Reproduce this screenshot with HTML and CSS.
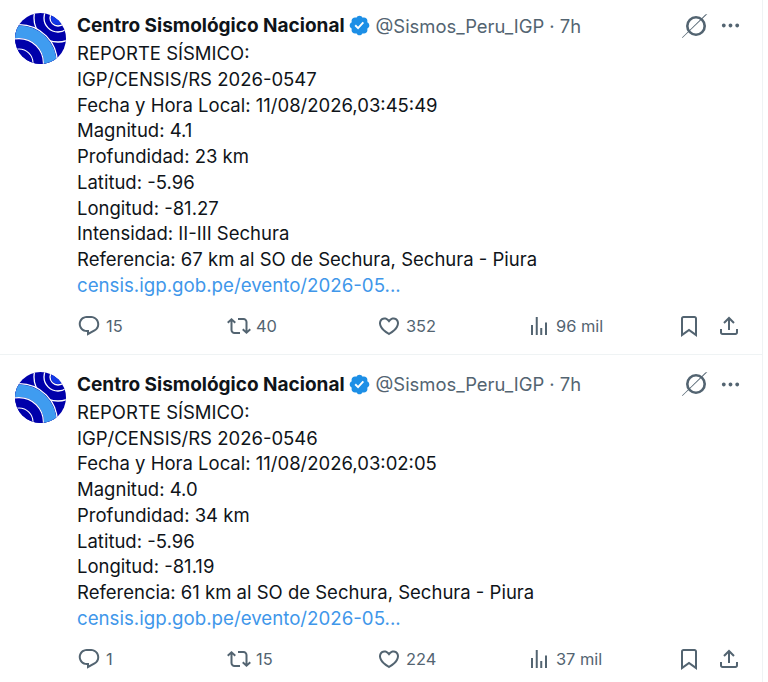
FILE: index.html
```html
<!DOCTYPE html>
<html lang="es">
<head>
    <meta charset="UTF-8">
    <meta name="viewport" content="width=device-width, initial-scale=1.0">
    <title>Centro Sismológico Nacional</title>
    <link rel="stylesheet" href="styles.css">
</head>
<body>
    <svg class="sprites" aria-hidden="true">
        <symbol id="i-verified" viewBox="0 0 24 24"><path d="M22.25 12c0-1.43-.88-2.67-2.19-3.34.46-1.39.2-2.9-.81-3.91s-2.52-1.27-3.91-.81c-.66-1.31-1.91-2.19-3.34-2.19s-2.67.88-3.33 2.19c-1.4-.46-2.91-.2-3.92.81s-1.26 2.52-.8 3.91c-1.31.67-2.2 1.91-2.2 3.34s.89 2.67 2.2 3.34c-.46 1.39-.21 2.9.8 3.91s2.52 1.26 3.91.81c.67 1.31 1.91 2.19 3.34 2.19s2.68-.88 3.34-2.19c1.39.45 2.9.2 3.91-.81s1.27-2.52.81-3.91c1.31-.67 2.19-1.91 2.19-3.34zm-11.71 4.2L6.8 12.46l1.41-1.42 2.26 2.26 4.8-5.23 1.47 1.36-6.2 6.77z"/></symbol>
        <symbol id="i-more" viewBox="0 0 24 24"><path d="M3 12c0-1.1.9-2 2-2s2 .9 2 2-.9 2-2 2-2-.9-2-2zm9 2c1.1 0 2-.9 2-2s-.9-2-2-2-2 .9-2 2 .9 2 2 2zm7 0c1.1 0 2-.9 2-2s-.9-2-2-2-2 .9-2 2 .9 2 2 2z"/></symbol>
        <symbol id="i-grok" viewBox="0 0 28 26"><path fill-rule="evenodd" d="M15 3a10 10 0 1 0 0 20a10 10 0 1 0 0-20zm0 2.6a7.4 7.4 0 1 1 0 14.8a7.4 7.4 0 1 1 0-14.8z"/><path d="M26.4 1 L1.4 25 L1 24.6 L24.4 1.6z"/></symbol>
        <symbol id="i-reply" viewBox="0 0 24 24"><path d="M1.751 10c0-4.42 3.584-8 8.005-8h4.366c4.49 0 8.129 3.64 8.129 8.13 0 2.96-1.607 5.68-4.196 7.11l-8.054 4.46v-3.69h-.067c-4.49.1-8.183-3.51-8.183-8.01zm8.005-6c-3.317 0-6.005 2.69-6.005 6 0 3.37 2.77 6.08 6.138 6.01l.351-.01h1.761v2.3l5.087-2.81c1.951-1.08 3.163-3.13 3.163-5.36 0-3.39-2.744-6.13-6.129-6.13H9.756z"/></symbol>
        <symbol id="i-repost" viewBox="0 0 24 24"><path d="M4.5 3.88l4.432 4.14-1.364 1.46L5.5 7.55V16c0 1.1.896 2 2 2H13v2H7.5c-2.209 0-4-1.79-4-4V7.55L1.432 9.48.068 8.02 4.5 3.88zM16.5 6H11V4h5.5c2.209 0 4 1.79 4 4v8.45l2.068-1.93 1.364 1.46-4.432 4.14-4.432-4.14 1.364-1.46 2.068 1.93V8c0-1.1-.896-2-2-2z"/></symbol>
        <symbol id="i-like" viewBox="0 0 24 24"><path d="M16.697 5.5c-1.222-.06-2.679.51-3.89 2.16l-.805 1.09-.806-1.09C9.984 6.01 8.526 5.44 7.304 5.5c-1.243.07-2.349.78-2.91 1.91-.552 1.12-.633 2.78.479 4.82 1.074 1.97 3.257 4.27 7.129 6.61 3.87-2.34 6.052-4.64 7.126-6.61 1.111-2.04 1.03-3.7.477-4.82-.561-1.13-1.666-1.84-2.908-1.91zm4.187 7.69c-1.351 2.48-4.001 5.12-8.379 7.67l-.503.3-.504-.3c-4.379-2.55-7.029-5.19-8.382-7.67-1.36-2.5-1.41-4.86-.514-6.67.887-1.79 2.647-2.91 4.601-3.01 1.651-.09 3.368.56 4.798 2.01 1.429-1.45 3.146-2.1 4.796-2.01 1.954.1 3.714 1.22 4.601 3.01.896 1.81.846 4.17-.514 6.67z"/></symbol>
        <symbol id="i-views" viewBox="0 0 24 24"><path d="M8.75 21V3h2v18h-2zM18 21V8.5h2V21h-2zM4 21l.004-10h2L6 21H4zm9.248 0v-7h2v7h-2z"/></symbol>
        <symbol id="i-bookmark" viewBox="0 0 24 24"><path d="M4 4.5C4 3.12 5.119 2 6.5 2h11C18.881 2 20 3.12 20 4.5v18.44l-8-5.71-8 5.71V4.5zM6.5 4c-.276 0-.5.22-.5.5v14.56l6-4.29 6 4.29V4.5c0-.28-.224-.5-.5-.5h-11z"/></symbol>
        <symbol id="i-share" viewBox="0 0 24 24"><path d="M12 2.59l5.7 5.7-1.41 1.42L13 6.41V16h-2V6.41l-3.3 3.3-1.41-1.42L12 2.59zM21 15l-.02 3.51c0 1.38-1.12 2.49-2.5 2.49H5.5C4.11 21 3 19.88 3 18.5V15h2v3.5c0 .28.22.5.5.5h12.98c.28 0 .5-.22.5-.5L19 15h2z"/></symbol>
        <symbol id="i-avatar" viewBox="0 0 51 51">
            <g fill="none">
                <rect width="51" height="51" fill="#0000aa"/>
                <circle cx="43" cy="5" r="7" fill="#1238e6"/>
                <circle cx="43" cy="5" r="8" stroke="#fff" stroke-width="1.3"/>
                <circle cx="43" cy="5" r="14" stroke="#fff" stroke-width="1.3"/>
                <circle cx="43" cy="5" r="24" stroke="#fff" stroke-width="1.3"/>
                <circle cx="4" cy="50" r="38.4" stroke="#fff" stroke-width="1.3" fill="#0000aa"/>
                <circle cx="4" cy="50" r="31.2" stroke="#3f9cf0" stroke-width="12.5"/>
                <circle cx="4" cy="50" r="24.4" stroke="#fff" stroke-width="1.1"/>
                <circle cx="4" cy="50" r="14" stroke="#fff" stroke-width="1.1"/>
            </g>
        </symbol>
    </svg>

    <main class="timeline">
        <article class="tweet">
            <svg class="avatar"><use href="#i-avatar"/></svg>
            <div class="tweet-body">
                <div class="tweet-head">
                    <span class="name">Centro Sismológico Nacional</span>
                    <svg class="verified"><use href="#i-verified"/></svg>
                    <span class="handle">@Sismos_Peru_IGP · 7h</span>
                    <span class="head-icons">
                        <svg class="grok"><use href="#i-grok"/></svg>
                        <svg class="more"><use href="#i-more"/></svg>
                    </span>
                </div>
                <p class="tweet-text">REPORTE SÍSMICO:
IGP/CENSIS/RS 2026-0547
Fecha y Hora Local: 11/08/2026,03:45:49
Magnitud: 4.1
Profundidad: 23 km
Latitud: -5.96
Longitud: -81.27
Intensidad: II-III Sechura
Referencia: 67 km al SO de Sechura, Sechura - Piura
<a class="link" href="#">censis.igp.gob.pe/evento/2026-05...</a></p>
                <div class="actions">
                    <span class="action"><svg><use href="#i-reply"/></svg>15</span>
                    <span class="action"><svg><use href="#i-repost"/></svg>40</span>
                    <span class="action"><svg><use href="#i-like"/></svg>352</span>
                    <span class="action"><svg><use href="#i-views"/></svg>96 mil</span>
                    <span class="action-end">
                        <svg><use href="#i-bookmark"/></svg>
                        <svg><use href="#i-share"/></svg>
                    </span>
                </div>
            </div>
        </article>

        <article class="tweet">
            <svg class="avatar"><use href="#i-avatar"/></svg>
            <div class="tweet-body">
                <div class="tweet-head">
                    <span class="name">Centro Sismológico Nacional</span>
                    <svg class="verified"><use href="#i-verified"/></svg>
                    <span class="handle">@Sismos_Peru_IGP · 7h</span>
                    <span class="head-icons">
                        <svg class="grok"><use href="#i-grok"/></svg>
                        <svg class="more"><use href="#i-more"/></svg>
                    </span>
                </div>
                <p class="tweet-text">REPORTE SÍSMICO:
IGP/CENSIS/RS 2026-0546
Fecha y Hora Local: 11/08/2026,03:02:05
Magnitud: 4.0
Profundidad: 34 km
Latitud: -5.96
Longitud: -81.19
Referencia: 61 km al SO de Sechura, Sechura - Piura
<a class="link" href="#">censis.igp.gob.pe/evento/2026-05...</a></p>
                <div class="actions">
                    <span class="action"><svg><use href="#i-reply"/></svg>1</span>
                    <span class="action"><svg><use href="#i-repost"/></svg>15</span>
                    <span class="action"><svg><use href="#i-like"/></svg>224</span>
                    <span class="action"><svg><use href="#i-views"/></svg>37 mil</span>
                    <span class="action-end">
                        <svg><use href="#i-bookmark"/></svg>
                        <svg><use href="#i-share"/></svg>
                    </span>
                </div>
            </div>
        </article>
    </main>
</body>
</html>
```

FILE: styles.css
```css
body {
    margin: 0;
    background: #fff;
    color: #0f1419;
    font-family: Inter, "Liberation Sans", sans-serif;
    overflow: hidden;
}
.sprites {
    display: none;
}
.timeline {
    width: 762px;
    height: 682px;
    border-right: 1px solid #eff3f4;
}
.tweet {
    display: flex;
    gap: 11px;
    padding: 13px 0 16px 15px;
    border-bottom: 1px solid #eff3f4;
}
.tweet + .tweet {
    padding-top: 17px;
    padding-bottom: 0;
    border-bottom: none;
}
.avatar {
    width: 51px;
    height: 51px;
    flex: none;
    border-radius: 50%;
}
.tweet-body {
    flex: 1;
    min-width: 0;
}
.tweet-head {
    display: flex;
    align-items: center;
    height: 25px;
}
.name {
    font-size: 19px;
    font-weight: 700;
}
.verified {
    width: 23px;
    height: 23px;
    margin-left: 3px;
    fill: #1d8fe6;
}
.handle {
    margin-left: 5px;
    font-size: 18.4px;
    color: #536471;
}
.head-icons {
    margin-left: auto;
    margin-right: 20px;
    display: flex;
    align-items: center;
    gap: 10px;
    fill: #536471;
}
.grok {
    width: 28px;
    height: 26px;
}
.more {
    width: 23px;
    height: 23px;
}
.tweet-text {
    margin: 3.3px 0 0;
    font-size: 18.5px;
    line-height: 25.7px;
    white-space: pre-line;
}
.link {
    color: #3f97ea;
    text-decoration: none;
    font-size: 18.7px;
}
.actions {
    display: flex;
    align-items: center;
    margin-top: 15.4px;
    color: #536471;
    font-size: 16.4px;
    fill: #536471;
}
.action {
    display: flex;
    align-items: center;
    gap: 5px;
    width: 150px;
}
.actions svg {
    width: 24px;
    height: 24px;
    flex: none;
}
.action-end {
    display: flex;
    gap: 16px;
}
```
